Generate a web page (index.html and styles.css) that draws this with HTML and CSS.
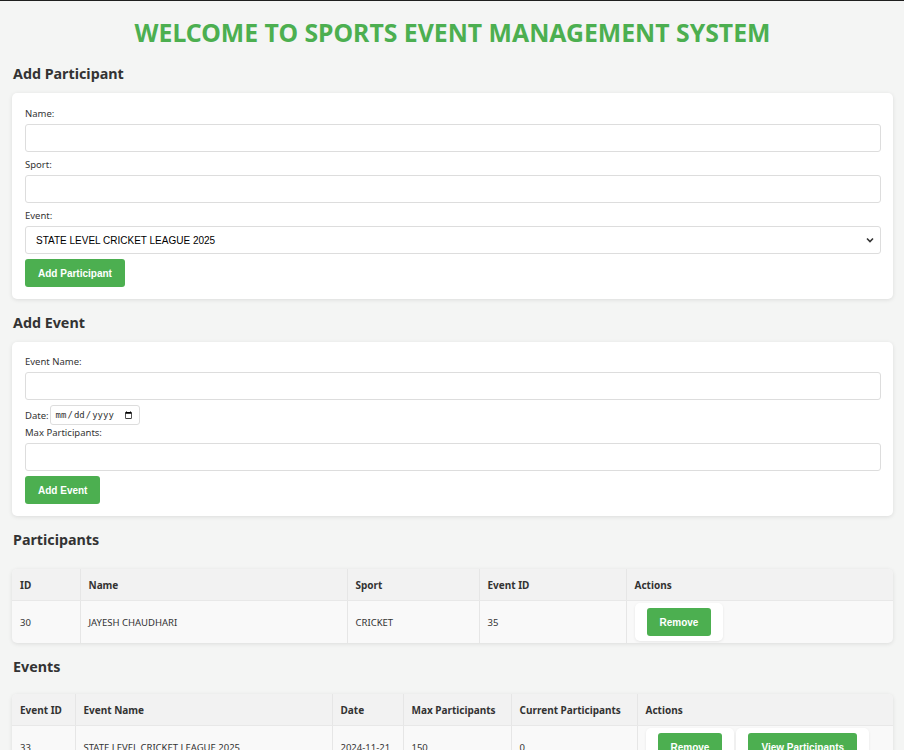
FILE: index.html
```html
<!DOCTYPE html>
<html lang="en">
<head>
<meta charset="utf-8">
<title>Sports Event Management System</title>
<link rel="stylesheet" href="styles.css">
</head>
<body>
<h1 class="title">WELCOME TO SPORTS EVENT MANAGEMENT SYSTEM</h1>

<h2 class="section-title first">Add Participant</h2>
<form class="card">
  <label class="field-label">Name:</label>
  <input class="text-input" type="text">
  <label class="field-label">Sport:</label>
  <input class="text-input" type="text">
  <label class="field-label">Event:</label>
  <select class="select-input">
    <option>STATE LEVEL CRICKET LEAGUE 2025</option>
  </select>
  <button class="btn" type="button">Add Participant</button>
</form>

<h2 class="section-title">Add Event</h2>
<form class="card compact">
  <label class="field-label">Event Name:</label>
  <input class="text-input" type="text">
  <div class="date-row">
    <label class="inline-label">Date:</label>
    <input class="date-input" type="date">
  </div>
  <label class="field-label">Max Participants:</label>
  <input class="text-input last" type="number">
  <button class="btn" type="button">Add Event</button>
</form>

<h2 class="section-title">Participants</h2>
<table class="data-table">
  <colgroup>
    <col style="width:68px"><col style="width:267px"><col style="width:132px"><col style="width:147px"><col>
  </colgroup>
  <thead>
    <tr><th>ID</th><th>Name</th><th>Sport</th><th>Event ID</th><th>Actions</th></tr>
  </thead>
  <tbody>
    <tr>
      <td>30</td><td>JAYESH CHAUDHARI</td><td>CRICKET</td><td>35</td>
      <td class="actions"><span class="action-box"><button class="btn" type="button">Remove</button></span></td>
    </tr>
  </tbody>
</table>

<h2 class="section-title">Events</h2>
<table class="data-table events">
  <colgroup>
    <col style="width:63px"><col style="width:257px"><col style="width:71px"><col style="width:108px"><col style="width:126px"><col>
  </colgroup>
  <thead>
    <tr><th>Event ID</th><th>Event Name</th><th>Date</th><th>Max Participants</th><th>Current Participants</th><th>Actions</th></tr>
  </thead>
  <tbody>
    <tr>
      <td>33</td><td>STATE LEVEL CRICKET LEAGUE 2025</td><td>2024-11-21</td><td>150</td><td>0</td>
      <td class="actions"><span class="action-group"><span class="action-box"><button class="btn" type="button">Remove</button></span><span class="action-box"><button class="btn" type="button">View Participants</button></span></span></td>
    </tr>
  </tbody>
</table>
</body>
</html>
```

FILE: styles.css
```css
html {
  border-top: 1px solid #1f1f1f;
}

body {
  margin: 0;
  padding: 0 11px 40px 12px;
  background: #f4f5f4;
  font-family: "Noto Sans", "Open Sans", sans-serif;
  color: #333;
}

.title {
  margin: 0;
  padding-top: 15px;
  line-height: 32px;
  font-size: 24.8px;
  font-weight: 700;
  color: #4caf50;
  text-align: center;
}

.section-title {
  margin: 14px 0 9px 1px;
  font-size: 14.3px;
  line-height: 20px;
  font-weight: 700;
  color: #333;
}

.section-title.first {
  margin-top: 16px;
}

.card {
  background: #fff;
  border-radius: 5px;
  box-shadow: 0 1px 4px rgba(0, 0, 0, 0.1);
  padding: 14px 12px 12px 13px;
}

.card.compact {
  padding-top: 13px;
}

.field-label {
  display: block;
  font-size: 9.5px;
  line-height: 13px;
  margin-bottom: 4px;
  color: #333;
}

.text-input {
  display: block;
  box-sizing: border-box;
  width: 100%;
  height: 28px;
  margin: 0 0 6px;
  border: 1px solid #ddd;
  border-radius: 3px;
  background: #fff;
}

.text-input.last {
  margin-bottom: 5px;
}

.select-input {
  display: block;
  box-sizing: border-box;
  width: 100%;
  height: 28px;
  margin: 0 0 5px;
  padding: 0 20px 0 10px;
  border: 1px solid #ddd;
  border-radius: 3px;
  -webkit-appearance: none;
  appearance: none;
  background: #fff url("data:image/svg+xml;utf8,<svg xmlns='http://www.w3.org/2000/svg' width='8' height='6' viewBox='0 0 8 6'><path d='M1 1.5 L4 4.5 L7 1.5' fill='none' stroke='%23333' stroke-width='1.6'/></svg>") no-repeat right 6px center;
  font-family: "Liberation Sans", Arial, sans-serif;
  font-size: 10px;
  color: #000;
}

.btn {
  display: inline-block;
  height: 28px;
  padding: 0 13px;
  border: none;
  border-radius: 3px;
  background: #4caf50;
  color: #fff;
  font-family: "Liberation Sans", Arial, sans-serif;
  font-size: 10px;
  font-weight: 700;
  vertical-align: middle;
}

.date-row {
  display: flex;
  align-items: center;
  height: 20px;
  margin-top: -1px;
  margin-bottom: 1px;
}

.inline-label {
  font-size: 9.5px;
  margin-right: 1px;
}

.date-input {
  box-sizing: border-box;
  width: 90px;
  height: 20px;
  padding: 0 4px;
  border: 1px solid #ddd;
  border-radius: 3px;
  font-family: "DejaVu Sans Mono", monospace;
  font-size: 9px;
  color: #333;
}

.data-table {
  width: 100%;
  table-layout: fixed;
  border-collapse: collapse;
  margin-top: 19px;
  background: #f9f9f9;
  border-radius: 5px;
  overflow: hidden;
  box-shadow: 0 1px 4px rgba(0, 0, 0, 0.1);
  font-size: 10px;
}

.data-table.events {
  margin-top: 17px;
}

.data-table th,
.data-table td {
  text-align: left;
  padding: 0 8px;
  border-left: 1px solid #e6e6e6;
  white-space: nowrap;
}

.data-table th:first-child,
.data-table td:first-child {
  border-left: none;
}

.data-table th {
  height: 31px;
  background: #f2f2f2;
  font-size: 10px;
  font-weight: 700;
  color: #333;
  border-bottom: 1px solid #e8e8e8;
}

.data-table td {
  height: 42px;
  font-size: 9.5px;
  color: #333;
}

.action-group {
  display: inline-flex;
  gap: 2px;
  vertical-align: middle;
}

.action-box {
  display: inline-block;
  padding: 5px 12px;
  background: #fff;
  border-radius: 5px;
  box-shadow: 0 1px 3px rgba(0, 0, 0, 0.08);
  vertical-align: middle;
}
```
